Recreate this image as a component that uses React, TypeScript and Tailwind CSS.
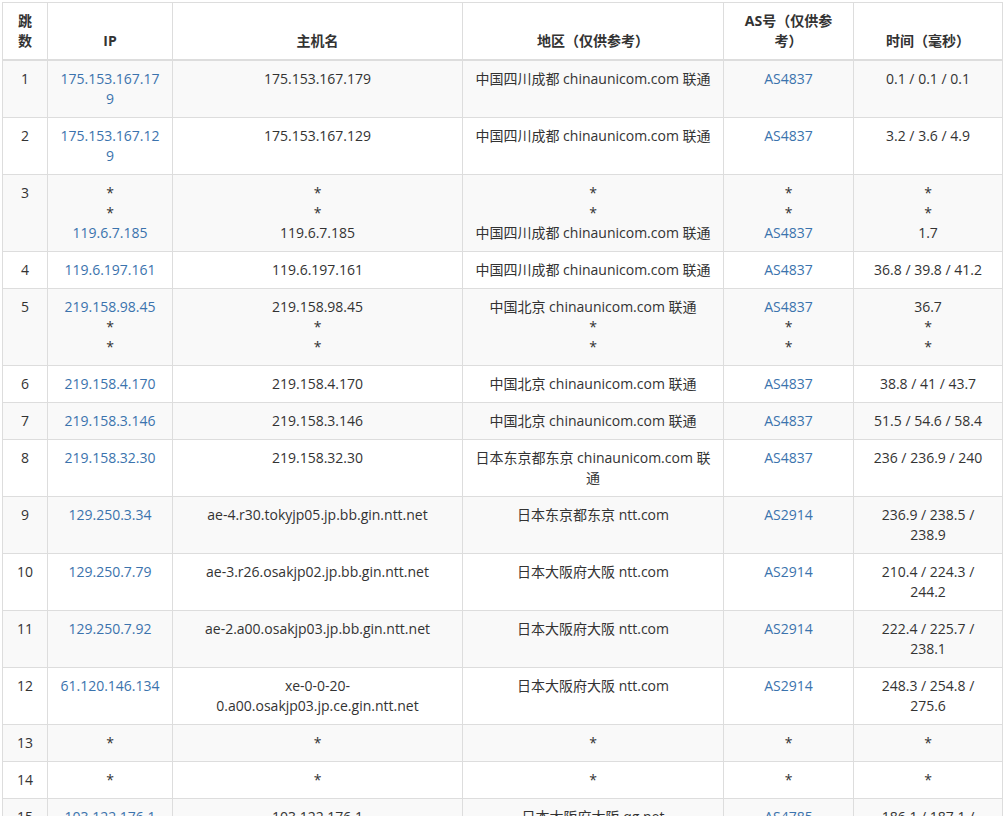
import React from "react";

type Row = [string, string[], string[], string[], string[], string[]];

const rows: Row[] = [
  ["1", ["175.153.167.179"], ["175.153.167.179"], ["中国四川成都 chinaunicom.com 联通"], ["AS4837"], ["0.1 / 0.1 / 0.1"]],
  ["2", ["175.153.167.129"], ["175.153.167.129"], ["中国四川成都 chinaunicom.com 联通"], ["AS4837"], ["3.2 / 3.6 / 4.9"]],
  ["3", ["*", "*", "119.6.7.185"], ["*", "*", "119.6.7.185"], ["*", "*", "中国四川成都 chinaunicom.com 联通"], ["*", "*", "AS4837"], ["*", "*", "1.7"]],
  ["4", ["119.6.197.161"], ["119.6.197.161"], ["中国四川成都 chinaunicom.com 联通"], ["AS4837"], ["36.8 / 39.8 / 41.2"]],
  ["5", ["219.158.98.45", "*", "*"], ["219.158.98.45", "*", "*"], ["中国北京 chinaunicom.com 联通", "*", "*"], ["AS4837", "*", "*"], ["36.7", "*", "*"]],
  ["6", ["219.158.4.170"], ["219.158.4.170"], ["中国北京 chinaunicom.com 联通"], ["AS4837"], ["38.8 / 41 / 43.7"]],
  ["7", ["219.158.3.146"], ["219.158.3.146"], ["中国北京 chinaunicom.com 联通"], ["AS4837"], ["51.5 / 54.6 / 58.4"]],
  ["8", ["219.158.32.30"], ["219.158.32.30"], ["日本东京都东京 chinaunicom.com 联通"], ["AS4837"], ["236 / 236.9 / 240"]],
  ["9", ["129.250.3.34"], ["ae-4.r30.tokyjp05.jp.bb.gin.ntt.net"], ["日本东京都东京 ntt.com"], ["AS2914"], ["236.9 / 238.5 / 238.9"]],
  ["10", ["129.250.7.79"], ["ae-3.r26.osakjp02.jp.bb.gin.ntt.net"], ["日本大阪府大阪 ntt.com"], ["AS2914"], ["210.4 / 224.3 / 244.2"]],
  ["11", ["129.250.7.92"], ["ae-2.a00.osakjp03.jp.bb.gin.ntt.net"], ["日本大阪府大阪 ntt.com"], ["AS2914"], ["222.4 / 225.7 / 238.1"]],
  ["12", ["61.120.146.134"], ["xe-0-0-20-0.a00.osakjp03.jp.ce.gin.ntt.net"], ["日本大阪府大阪 ntt.com"], ["AS2914"], ["248.3 / 254.8 / 275.6"]],
  ["13", ["*"], ["*"], ["*"], ["*"], ["*"]],
  ["14", ["*"], ["*"], ["*"], ["*"], ["*"]],
  ["15", ["103.122.176.1"], ["103.122.176.1"], ["日本大阪府大阪 qg.net"], ["AS4785"], ["186.1 / 187.1 / 188.3"]],
];

const Lines = ({ items, link }: { items: string[]; link?: boolean }) => (
  <>
    {items.map((t, i) => (
      <div key={i} className={link && t !== "*" ? "text-[#3b73ad]" : ""}>
        {t}
      </div>
    ))}
  </>
);

export default function App() {
  const td = "border border-[#dddddd] px-3 py-2 align-top text-center break-words";
  const tdRegion = "border border-[#dddddd] px-2 py-2 align-top text-center break-words";
  const th = "border border-[#dddddd] border-b-2 px-3 py-2 align-bottom text-center font-bold";
  return (
    <div
      className="bg-white p-[2px] text-[14px] leading-[20px] text-[#333333]"
      style={{ fontFamily: '"Open Sans", "Noto Sans CJK SC", sans-serif' }}
    >
      <table className="w-[1000px] table-fixed border-collapse">
        <colgroup>
          <col className="w-[45px]" />
          <col className="w-[125px]" />
          <col className="w-[290px]" />
          <col className="w-[261px]" />
          <col className="w-[130px]" />
          <col className="w-[149px]" />
        </colgroup>
        <thead>
          <tr>
            <th className={th}>跳数</th>
            <th className={th}>IP</th>
            <th className={th}>主机名</th>
            <th className={th}>地区（仅供参考）</th>
            <th className={th}>AS号（仅供参<br />考）</th>
            <th className={th}>时间（毫秒）</th>
          </tr>
        </thead>
        <tbody>
          {rows.map((r, i) => (
            <tr key={r[0]} className={i % 2 === 0 ? "bg-[#f9f9f9]" : "bg-white"}>
              <td className={td}>{r[0]}</td>
              <td className={td}><Lines items={r[1]} link /></td>
              <td className={td}><Lines items={r[2]} /></td>
              <td className={tdRegion}><Lines items={r[3]} /></td>
              <td className={td}><Lines items={r[4]} link /></td>
              <td className={td}><Lines items={r[5]} /></td>
            </tr>
          ))}
        </tbody>
      </table>
    </div>
  );
}
